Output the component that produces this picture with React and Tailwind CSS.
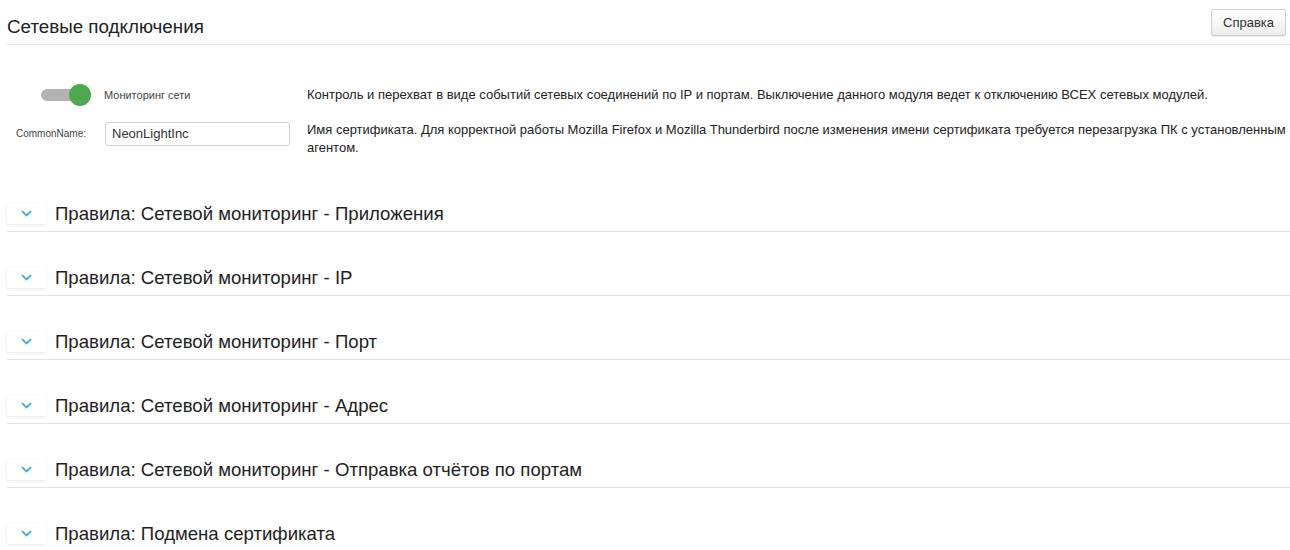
const rules = [
  "Правила: Сетевой мониторинг - Приложения",
  "Правила: Сетевой мониторинг - IP",
  "Правила: Сетевой мониторинг - Порт",
  "Правила: Сетевой мониторинг - Адрес",
  "Правила: Сетевой мониторинг - Отправка отчётов по портам",
  "Правила: Подмена сертификата",
];

const Chevron = () => (
  <svg width="11" height="7" viewBox="0 0 11 7" fill="none">
    <path d="M1 1l4.5 4.5L10 1" stroke="#2f9be0" strokeWidth="1.6" />
  </svg>
);

export default function App() {
  return (
    <div className="h-[550px] overflow-hidden bg-white pl-[7px] font-['Liberation_Sans',Arial,sans-serif] text-[#222]">
      <div className="flex h-[45px] items-center justify-between border-b border-[#e3e3e3] pt-[10px]">
        <h1 className="text-[18.8px] text-[#222]">Сетевые подключения</h1>
        <button className="mr-[4px] -mt-[9px] h-[27px] rounded-[2px] border border-[#cfcfcf] bg-gradient-to-b from-white to-[#ededed] px-[11px] text-[13px] text-[#333] shadow-[0_1px_1px_rgba(0,0,0,0.08)]">
          Справка
        </button>
      </div>

      <div className="mt-[41px] flex flex-col gap-[17px]">
        <div className="flex items-center">
          <div className="flex w-[97px] items-center justify-end pr-[16px]">
            <div className="relative h-[12px] w-[47px] rounded-full bg-[#b3b3b3]">
              <div className="absolute -top-[5px] right-[-3px] h-[22px] w-[22px] rounded-full bg-[#4fa84f]" />
            </div>
          </div>
          <div className="w-[203px] text-[11px] text-[#444]">Мониторинг сети</div>
          <div className="flex-1 text-[13px] leading-[18px] text-[#222]">
            Контроль и перехват в виде событий сетевых соединений по IP и портам. Выключение данного модуля ведет к отключению ВСЕХ сетевых модулей.
          </div>
        </div>

        <div className="flex items-start">
          <div className="flex h-[24px] w-[79px] items-center justify-end text-[10px] text-[#444]">CommonName:</div>
          <div className="ml-[19px] w-[202px]">
            <input
              readOnly
              value="NeonLightInc"
              className="h-[24px] w-[185px] rounded-[3px] border border-[#cfcfcf] px-[6px] text-[13px] text-[#333] outline-none"
            />
          </div>
          <div className="flex-1 text-[13px] leading-[18px] text-[#222]">
            Имя сертификата. Для корректной работы Mozilla Firefox и Mozilla Thunderbird после изменения имени сертификата требуется перезагрузка ПК с установленным агентом.
          </div>
        </div>
      </div>

      <div className="mt-[39px]">
        {rules.map((r) => (
          <div key={r} className="mb-[28px] flex h-[36px] items-center border-b border-[#e3e3e3] last:mb-0">
            <div className="flex h-[21px] w-[39px] items-center justify-center rounded-[3px] bg-white shadow-[0_1px_3px_rgba(0,0,0,0.1)]">
              <Chevron />
            </div>
            <span className="ml-[9px] text-[18.6px] text-[#1e1e1e]">{r}</span>
          </div>
        ))}
      </div>
    </div>
  );
}
